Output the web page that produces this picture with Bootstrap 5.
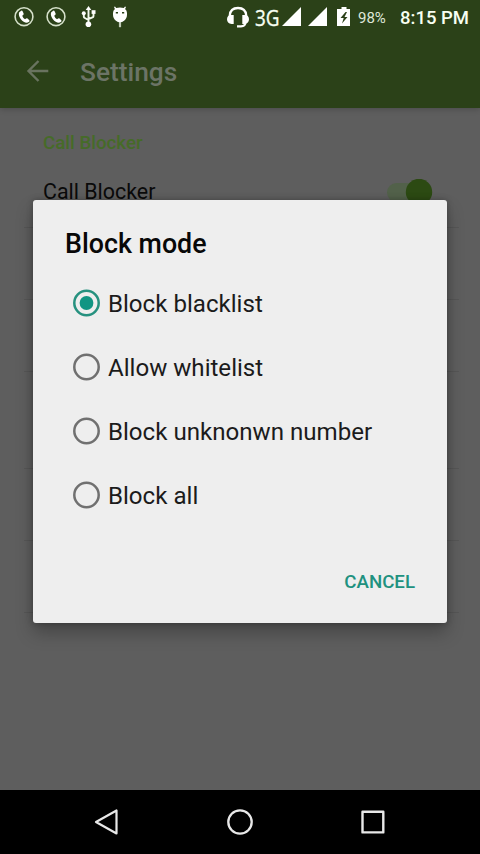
<!DOCTYPE html>
<html lang="en">
<head>
<meta charset="utf-8">
<meta name="viewport" content="width=device-width, initial-scale=1">
<title>Settings</title>
<link href="https://cdn.jsdelivr.net/npm/bootstrap@5.3.0/dist/css/bootstrap.min.css" rel="stylesheet">
<style>
html,body{height:100%}
body{font-family:Roboto,"Noto Sans",sans-serif;background:#5e5e5e;color:#0a0a0a;overflow:hidden}
svg{display:block;flex:none}
.phone{width:480px;height:854px}
.top-area{height:108px;background:#2b4118;box-shadow:0 1px 6px rgba(0,0,0,.22);z-index:1}
.status-row{height:34px;color:#f8fff2;line-height:34px}
.net{font:21.5px/37px "Open Sans","Noto Sans",sans-serif;width:27px;transform-origin:0 50%;transform:scaleX(.88);-webkit-text-stroke:.35px #f8fff2}
.pct{font-size:15px;width:42px;padding-top:1px;color:#dfe7d9}
.clock{font-size:18.5px;font-weight:500;padding:2px 11px 0 0}
.app-row{height:74px;color:#69725f;padding-left:24px}
.app-title{font-size:26.3px;font-weight:500;line-height:30px;color:#6c7466;padding-top:2px}
.section-title{height:48px;padding:22px 0 0 19px;font-size:18.7px;line-height:26px;font-weight:500;color:#466b28}
.prefs{margin:0 21px 0 24px}
.pref{border-bottom:1px solid #565656}
.pref-main{height:72px;padding:1px 26px 0 19px;font-size:21.4px}
.pref-main span{padding-top:1px}
.h72{height:72px}.h97{height:97px}
.track{width:46px;height:27px}
.overlay-area{inset:0 0 64px 0;z-index:2;padding:200px 33px 0}
.dialog-box{height:423px;background:#eee;border-radius:3px;box-shadow:0 10px 17px rgba(0,0,0,.26),0 0 6px rgba(0,0,0,.28);padding:0 32px}
.dialog-title{font-size:26.8px;font-weight:500;line-height:32px;margin:28px 0 11px;color:#080808}
.choice{height:64px;padding-left:7px;gap:7px;font-size:24.1px;color:#1b1b1b;line-height:30px}
.choice span{padding-top:2px}
.cancel{font-size:18.7px;font-weight:500;line-height:24px;color:#20917f;margin-top:43px}
.nav-row{height:64px;background:#000;padding:0 94px}
</style>
</head>
<body>
<div class="phone position-relative d-flex flex-column">
  <header class="top-area position-relative">
    <div class="status-row d-flex align-items-center justify-content-between">
      <div class="d-flex align-items-center">
        <svg width="136" height="34" viewBox="0 0 136 34" fill="none" stroke="#f4fbee">
          <g id="call">
            <circle cx="24" cy="16.7" r="8.9" stroke-width="1.6" stroke="#d5e0ca"/>
            <path d="M19.200 12.200 21.200 10.800q.9-.5 1.400.4l1 2.400q.3.900-.4 1.400l-1 .8q.8 2.400 2.800 3.500l1.100-.8q.8-.5 1.500.1l1.700 1.700q.6.8-.2 1.400-2.400 1.800-5 .3-4.200-2.400-5.200-7-.2-1.800.3-2.800Z" fill="#fff" stroke="none"/>
          </g>
          <use href="#call" x="32"/>
          <g stroke-width="1.9">
            <path d="M88.500 9v14M83.800 13.500v3q0 1 1 1.500l3.700 2M93.500 12v4q0 1-1 1.500l-4 1.500"/>
            <path d="m88.500 6 2.800 4h-5.600Z" fill="#fff" stroke="none"/>
            <circle cx="88.400" cy="24.300" r="2.800" fill="#fff" stroke="none"/>
            <circle cx="83.800" cy="13.300" r="2" fill="#fff" stroke="none"/>
            <path d="M91.600 10.200h3.900v3.700h-3.900z" fill="#fff" stroke="none"/>
          </g>
          <path d="M118.900 21h2.200v6.200h-2.200z" fill="#bfc9b6" stroke="none"/>
          <path d="M113 13q0-2.300 1.900-4L114 7l1-.4 1.200 1.500q3.800-1 7.600 0L125 6.600l1 .4-.9 2q1.900 1.700 1.900 4v1.500q0 4-2.900 6.200-4.100 3-8.200 0Q113 18.500 113 14.500Z" fill="#fff" stroke="none"/>
          <path d="M115.800 12.800h2.200M122 12.800h2.200" stroke="#2b4118" stroke-width="1.500"/>
        </svg>
      </div>
      <div class="d-flex align-items-center">
        <svg width="28" height="34" viewBox="0 0 28 34">
          <path d="M2.800 17v-1.500Q3.300 8 11 8t8.200 7.500V17" fill="none" stroke="#fff" stroke-width="2.300"/>
          <path d="M6.700 15v9H4.600Q0 23.500 0 19.300T4.600 15ZM15.300 15v9h2.100q4.600-.5 4.600-4.700T17.400 15Z" fill="#fff"/>
          <path d="M18.500 22q0 4.300-4.500 4.300h-4" fill="none" stroke="#fff" stroke-width="2.200"/>
        </svg>
        <span class="net">3G</span>
        <svg width="76" height="34" viewBox="0 0 76 34" fill="#fff">
          <path d="M19 7v19H0ZM45 7v19H26Z"/>
          <path fill-rule="evenodd" d="M59.500 7h5v2H68v17H55V9h4.500ZM63.500 12l-5 6h3.200l-1.700 5.500 5.500-6.500h-3l2.500-5Z"/>
        </svg>
        <span class="pct">98%</span>
        <span class="clock">8:15 PM</span>
      </div>
    </div>
    <div class="app-row d-flex align-items-center">
      <svg width="56" height="30" viewBox="0 0 56 30" fill="none" stroke="#69735f" stroke-width="2.400"><path d="M24.300 15H4.500M14.500 5l-10 10 10 10"/></svg>
      <h1 class="app-title m-0">Settings</h1>
    </div>
  </header>
  <main class="flex-grow-1">
    <div class="prefs">
      <div class="section-title">Call Blocker</div>
      <div class="pref pref-main d-flex align-items-center justify-content-between">
        <span>Call Blocker</span>
        <svg class="track" viewBox="0 0 46 27"><rect x="0" y="4" width="42" height="19" rx="9.500" fill="#52614a"/><circle cx="32" cy="13" r="13.200" fill="#2c4a13"/></svg>
      </div>
      <div class="pref h72"></div>
      <div class="pref h72"></div>
      <div class="pref h97"></div>
      <div class="pref h72"></div>
      <div class="pref h72"></div>
    </div>
  </main>
  <div class="overlay-area position-absolute">
    <section class="dialog-box d-flex flex-column" role="dialog" aria-label="Block mode">
      <h2 class="dialog-title">Block mode</h2>
      <div class="choice d-flex align-items-center"><svg width="29" height="29" viewBox="0 0 29 29"><circle cx="14.500" cy="14" r="12.200" fill="none" stroke="#26917f" stroke-width="2.500"/><circle cx="14.500" cy="14" r="6.900" fill="#119583"/></svg><span>Block blacklist</span></div>
      <div class="choice d-flex align-items-center"><svg width="29" height="29" viewBox="0 0 29 29"><circle cx="14.500" cy="14" r="12.200" fill="none" stroke="#707070" stroke-width="2.500"/></svg><span>Allow whitelist</span></div>
      <div class="choice d-flex align-items-center"><svg width="29" height="29" viewBox="0 0 29 29"><circle cx="14.500" cy="14" r="12.200" fill="none" stroke="#707070" stroke-width="2.500"/></svg><span>Block unknonwn number</span></div>
      <div class="choice d-flex align-items-center"><svg width="29" height="29" viewBox="0 0 29 29"><circle cx="14.500" cy="14" r="12.200" fill="none" stroke="#707070" stroke-width="2.500"/></svg><span>Block all</span></div>
      <div class="cancel text-end">CANCEL</div>
    </section>
  </div>
  <nav class="nav-row d-flex align-items-center justify-content-between">
    <svg width="26" height="28" viewBox="0 0 26 28" fill="none" stroke="#e8e8e8" stroke-width="2.200" stroke-linejoin="round"><path d="M22.500 2.500v23L2 14Z"/></svg>
    <svg width="28" height="28" viewBox="0 0 28 28" fill="none" stroke="#e8e8e8" stroke-width="2.300"><circle cx="14" cy="14" r="11.700"/></svg>
    <svg width="26" height="28" viewBox="0 0 26 28" fill="none" stroke="#e8e8e8" stroke-width="2.400" stroke-linejoin="round"><path d="M2.500 3.800h20.800v20.600H2.500z"/></svg>
  </nav>
</div>
<script src="https://cdn.jsdelivr.net/npm/bootstrap@5.3.0/dist/js/bootstrap.bundle.min.js"></script>
</body>
</html>
